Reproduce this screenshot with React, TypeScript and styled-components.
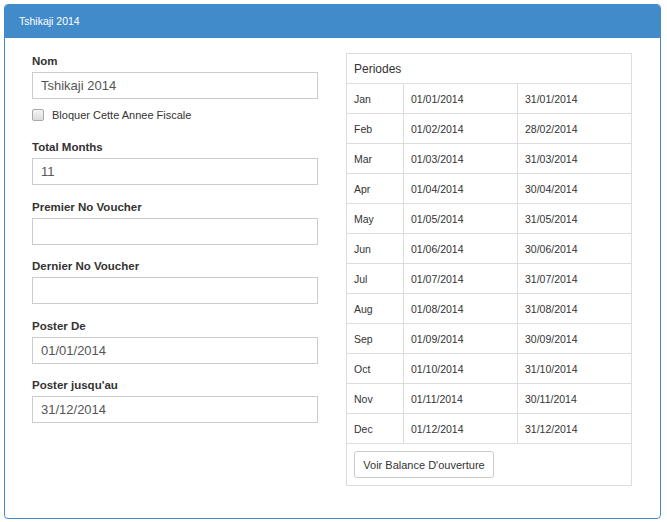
import React from 'react';
import styled, { createGlobalStyle } from 'styled-components';

const GlobalStyle = createGlobalStyle`
  body {
    margin: 4px 6px 4px 4px;
    background: #fff;
    font-family: "Liberation Sans", Arial, sans-serif;
    color: #333;
  }
`;

const Panel = styled.div`
  width: 657px;
  box-sizing: border-box;
  border: 1px solid #428bca;
  border-radius: 4px;
  background: #fff;
`;

const PanelHeading = styled.div`
  height: 33px;
  background: #428bca;
  color: #fff;
  font-size: 10.5px;
  line-height: 33px;
  padding-left: 14px;
  border-radius: 3px 3px 0 0;
`;

const PanelBody = styled.div`
  display: grid;
  grid-template-columns: 286px 285px;
  column-gap: 28px;
  padding: 15px 0 32px 27px;
  align-items: start;
`;

const FormColumn = styled.div`
  display: flex;
  flex-direction: column;
`;

const Group = styled.div<{ $gap?: number }>`
  display: flex;
  flex-direction: column;
  margin-bottom: ${(p) => p.$gap ?? 14}px;
`;

const Label = styled.label`
  font-size: 11.5px;
  font-weight: bold;
  line-height: 16px;
  height: 16px;
  margin-bottom: 3px;
  color: #333;
`;

const Input = styled.input`
  box-sizing: border-box;
  width: 100%;
  height: 27px;
  border: 1px solid #ccc;
  border-radius: 0;
  padding: 0 8px;
  font-family: "Liberation Sans", Arial, sans-serif;
  font-size: 13px;
  color: #555;
  outline: none;
  margin: 0;
`;

const CheckRow = styled.label`
  display: flex;
  align-items: center;
  height: 16px;
  margin: 8px 0 16px;
  font-size: 11px;
  color: #333;
`;

const Box = styled.span`
  display: inline-block;
  width: 10px;
  height: 10px;
  border: 1px solid #aaa;
  border-radius: 2px;
  background: linear-gradient(#f4f4f4, #dcdcdc);
  margin-right: 8px;
`;

const Table = styled.table`
  width: 285px;
  border-collapse: collapse;
  table-layout: fixed;
  font-size: 10.5px;
  color: #333;
`;

const HeadCell = styled.th`
  border: 1px solid #ddd;
  height: 29px;
  padding: 0 7px;
  text-align: left;
  font-weight: normal;
  font-size: 12px;
`;

const Cell = styled.td`
  border: 1px solid #ddd;
  height: 29px;
  padding: 0 7px;
`;

const FooterCell = styled.td`
  border: 1px solid #ddd;
  padding: 7px 7px 7px;
`;

const Button = styled.button`
  box-sizing: border-box;
  width: 140px;
  height: 27px;
  border: 1px solid #ccc;
  border-radius: 3px;
  background: #fff;
  color: #333;
  font-family: "Liberation Sans", Arial, sans-serif;
  font-size: 11px;
  padding: 0;
  cursor: pointer;
  display: block;
`;

const months = ['Jan', 'Feb', 'Mar', 'Apr', 'May', 'Jun', 'Jul', 'Aug', 'Sep', 'Oct', 'Nov', 'Dec'];
const lastDays = [31, 28, 31, 30, 31, 30, 31, 31, 30, 31, 30, 31];

const pad = (n: number) => (n < 10 ? `0${n}` : `${n}`);

const periods = months.map((m, i) => ({
  name: m,
  start: `01/${pad(i + 1)}/2014`,
  end: `${lastDays[i]}/${pad(i + 1)}/2014`,
}));

const App = () => (
  <>
    <GlobalStyle />
    <Panel>
      <PanelHeading>Tshikaji 2014</PanelHeading>
      <PanelBody>
        <FormColumn>
          <Group $gap={0}>
            <Label>Nom</Label>
            <Input defaultValue="Tshikaji 2014" />
          </Group>
          <CheckRow>
            <Box />
            Bloquer Cette Annee Fiscale
          </CheckRow>
          <Group>
            <Label>Total Months</Label>
            <Input defaultValue="11" />
          </Group>
          <Group $gap={13}>
            <Label>Premier No Voucher</Label>
            <Input />
          </Group>
          <Group>
            <Label>Dernier No Voucher</Label>
            <Input />
          </Group>
          <Group $gap={13}>
            <Label>Poster De</Label>
            <Input defaultValue="01/01/2014" />
          </Group>
          <Group $gap={0}>
            <Label>Poster jusqu'au</Label>
            <Input defaultValue="31/12/2014" />
          </Group>
        </FormColumn>
        <Table>
          <colgroup>
            <col style={{ width: 57 }} />
            <col style={{ width: 114 }} />
            <col style={{ width: 114 }} />
          </colgroup>
          <thead>
            <tr>
              <HeadCell colSpan={3}>Periodes</HeadCell>
            </tr>
          </thead>
          <tbody>
            {periods.map((p) => (
              <tr key={p.name}>
                <Cell>{p.name}</Cell>
                <Cell>{p.start}</Cell>
                <Cell>{p.end}</Cell>
              </tr>
            ))}
            <tr>
              <FooterCell colSpan={3}>
                <Button>Voir Balance D'ouverture</Button>
              </FooterCell>
            </tr>
          </tbody>
        </Table>
      </PanelBody>
    </Panel>
  </>
);

export default App;
